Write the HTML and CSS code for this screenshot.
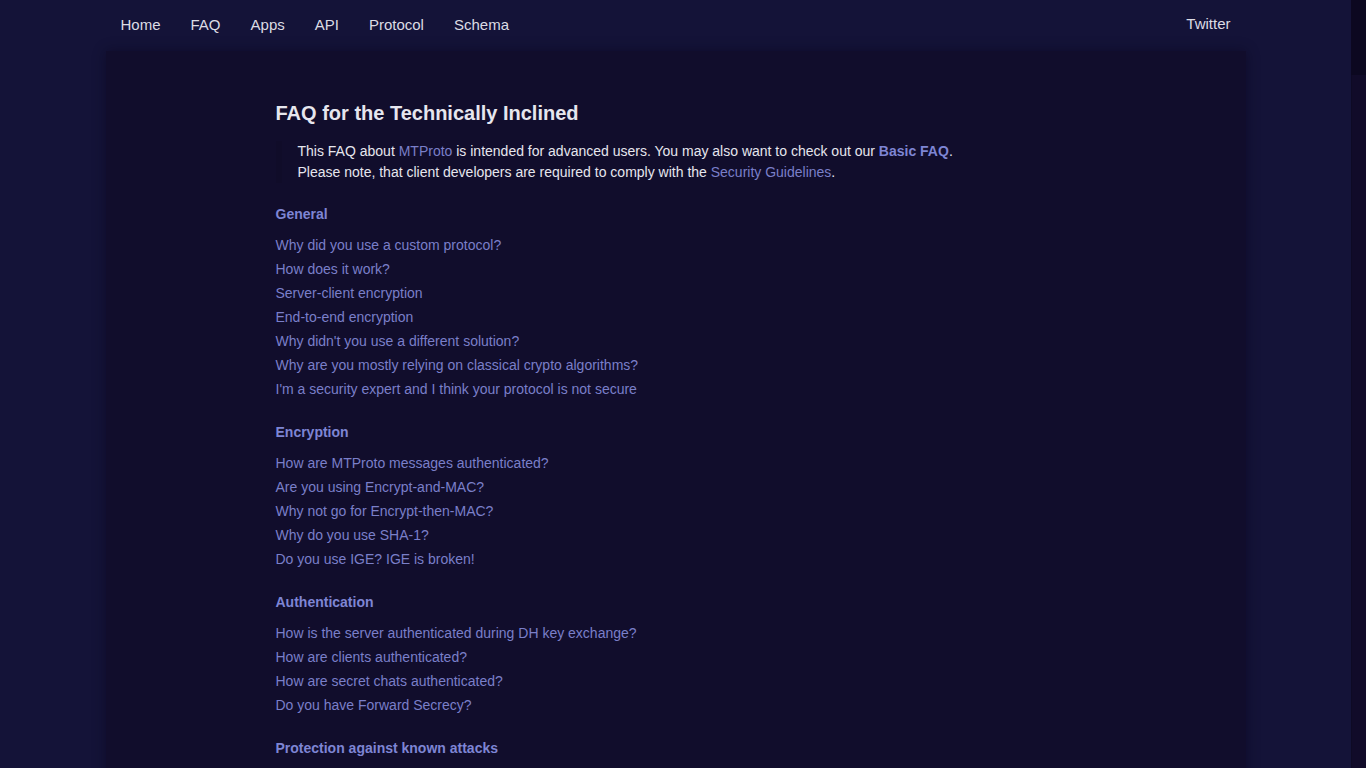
FILE: index.html
```html
<!DOCTYPE html>
<html lang="en">
<head>
<meta charset="utf-8">
<title>FAQ for the Technically Inclined</title>
<link rel="stylesheet" href="styles.css">
</head>
<body>
<div class="viewport">
  <header class="navbar">
    <div class="container nav-inner">
      <ul class="nav">
        <li><a href="#">Home</a></li>
        <li><a href="#">FAQ</a></li>
        <li><a href="#">Apps</a></li>
        <li><a href="#">API</a></li>
        <li><a href="#">Protocol</a></li>
        <li><a href="#">Schema</a></li>
      </ul>
      <ul class="nav nav-right">
        <li><a href="#">Twitter</a></li>
      </ul>
    </div>
  </header>
  <main class="container page">
    <div class="content">
      <h1 class="title">FAQ for the Technically Inclined</h1>
      <blockquote class="intro">
        <p>This FAQ about <a href="#" class="link">MTProto</a> is intended for advanced users. You may also want to check out our <a href="#" class="link strong">Basic FAQ</a>.<br>
        Please note, that client developers are required to comply with the <a href="#" class="link">Security Guidelines</a>.</p>
      </blockquote>

      <section class="toc">
        <h4><a href="#" class="link strong">General</a></h4>
        <ul>
          <li><a href="#" class="link">Why did you use a custom protocol?</a></li>
          <li><a href="#" class="link">How does it work?</a></li>
          <li><a href="#" class="link">Server-client encryption</a></li>
          <li><a href="#" class="link">End-to-end encryption</a></li>
          <li><a href="#" class="link">Why didn't you use a different solution?</a></li>
          <li><a href="#" class="link">Why are you mostly relying on classical crypto algorithms?</a></li>
          <li><a href="#" class="link">I'm a security expert and I think your protocol is not secure</a></li>
        </ul>
      </section>

      <section class="toc">
        <h4><a href="#" class="link strong">Encryption</a></h4>
        <ul>
          <li><a href="#" class="link">How are MTProto messages authenticated?</a></li>
          <li><a href="#" class="link">Are you using Encrypt-and-MAC?</a></li>
          <li><a href="#" class="link">Why not go for Encrypt-then-MAC?</a></li>
          <li><a href="#" class="link">Why do you use SHA-1?</a></li>
          <li><a href="#" class="link">Do you use IGE? IGE is broken!</a></li>
        </ul>
      </section>

      <section class="toc">
        <h4><a href="#" class="link strong">Authentication</a></h4>
        <ul>
          <li><a href="#" class="link">How is the server authenticated during DH key exchange?</a></li>
          <li><a href="#" class="link">How are clients authenticated?</a></li>
          <li><a href="#" class="link">How are secret chats authenticated?</a></li>
          <li><a href="#" class="link">Do you have Forward Secrecy?</a></li>
        </ul>
      </section>

      <section class="toc">
        <h4><a href="#" class="link strong">Protection against known attacks</a></h4>
      </section>
    </div>
  </main>
</div>
<div class="scrollbar" aria-hidden="true"><div class="thumb"></div></div>
</body>
</html>
```

FILE: styles.css
```css
html {
  background: #141338;
  scrollbar-width: none;
}
html::-webkit-scrollbar {
  display: none;
}

body {
  margin: 0;
  background: #141338;
  color: #e6e6ee;
  font-family: "Liberation Sans", Arial, sans-serif;
  font-size: 14px;
  line-height: 21px;
}

.viewport {
  margin-right: 15px;
}

.container {
  width: 1140px;
  margin: 0 auto;
  box-sizing: border-box;
}

.navbar {
  height: 51px;
}
.nav-inner {
  display: flex;
  justify-content: space-between;
  align-items: flex-start;
}
.nav {
  list-style: none;
  margin: 0;
  padding: 0;
  display: flex;
}
.nav a {
  display: block;
  padding: 15px 15px 0;
  font-size: 15px;
  line-height: 20px;
  color: #dcdce4;
  text-decoration: none;
}
.nav-right a {
  padding-top: 14px;
}

.page {
  background: #110d2c;
  box-shadow: 0 0 12px rgba(8, 5, 25, 0.45);
  min-height: 7600px;
}
.content {
  padding: 50px 170px 40px;
}

.title {
  margin: 0;
  font-size: 20px;
  line-height: 24px;
  font-weight: bold;
  color: #e6e6ee;
}

.intro {
  margin: 16px 0 0;
  padding: 0 0 0 16px;
  border-left: 6px solid #100c29;
}
.intro p {
  margin: 0;
  line-height: 21px;
}

.link {
  color: #7a7fc9;
  text-decoration: none;
}
.link.strong {
  font-weight: bold;
  color: #7e85d4;
}

.toc {
  margin-top: 21px;
}
.toc + .toc {
  margin-top: 21px;
}
.toc h4 {
  margin: 0;
  font-size: 14px;
  line-height: 20px;
}
.toc ul {
  list-style: none;
  margin: 9px 0 0;
  padding: 0;
}
.toc li {
  line-height: 24px;
}

.scrollbar {
  position: fixed;
  top: 0;
  right: 0;
  width: 15px;
  height: 100vh;
  background: #110b29;
  box-shadow: inset 1px 0 0 #0e0a24;
}
.thumb {
  height: 75px;
  background: #0c0820;
}
```
